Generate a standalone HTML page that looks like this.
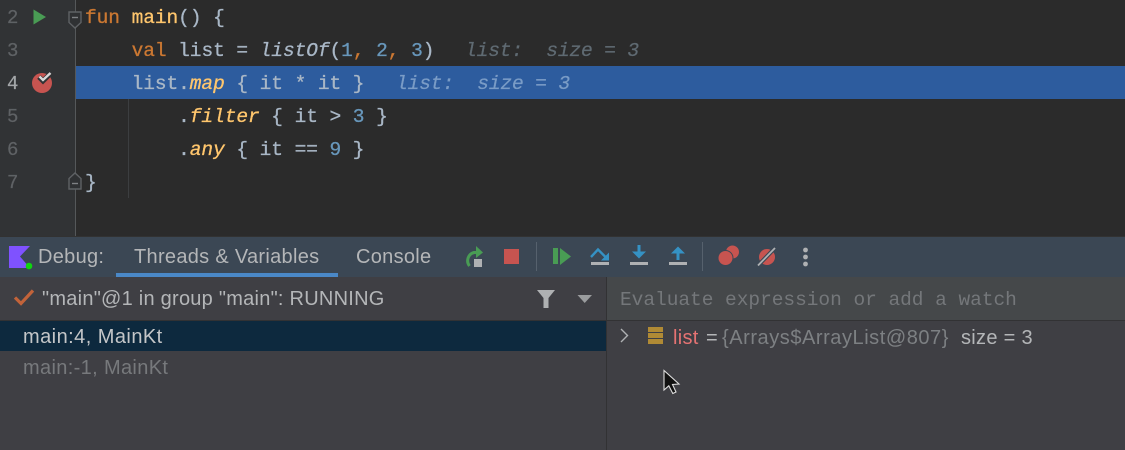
<!DOCTYPE html>
<html><head><meta charset="utf-8">
<style>
html,body{margin:0;padding:0;background:#2b2b2b}
#r{position:relative;width:1125px;height:450px;overflow:hidden;background:#2b2b2b}
.a{position:absolute}
.c,.n,.s,.t{position:absolute;white-space:pre}
.c{font:19.5px/33px "Liberation Mono",monospace;color:#a9b7c6;left:85px;height:33px;letter-spacing:-.06px;-webkit-text-stroke:.3px currentColor}
.t{font:italic 19.5px/33px "Liberation Mono",monospace;-webkit-text-stroke:.25px currentColor}
.n{font:19px/33px "Liberation Mono",monospace;color:#5f6265;left:7px;-webkit-text-stroke:.2px currentColor}
.s{font:20px/24px "Liberation Sans",sans-serif;color:#b4b6b8;letter-spacing:.3px}
.k{color:#cc7832}.f{color:#ffc66d}.i{font-style:italic}.d{color:#6897bb}
</style></head><body><div id="r">
<div class="a" style="left:0;top:0;width:75px;height:237px;background:#313335"></div>
<div class="a" style="left:74.500px;top:0;width:1.500px;height:237px;background:#55585a"></div>
<div class="a" style="left:76px;top:66px;width:1049px;height:33px;background:#2d5c9e"></div>
<div class="a" style="left:128px;top:99px;width:1px;height:99px;background:#3c3e40"></div>

<div class="n" style="top:2px">2</div><div class="n" style="top:35px">3</div><div class="n" style="top:68px;color:#a4a7a9">4</div><div class="n" style="top:101px">5</div><div class="n" style="top:134px">6</div><div class="n" style="top:167px">7</div>

<svg class="a" style="left:0;top:0" width="85" height="200">
<path d="M33.500 9.500L46 17L33.500 24.500Z" fill="#499c54"/>
<path d="M69 12H81V22.500L75 28L69 22.500Z" fill="#2f3133" stroke="#5f6265" stroke-width="1.400"/><path d="M72 17.500H78" stroke="#7f8285" stroke-width="1.400"/>
<path d="M69 183V178.500L75 173L81 178.500V189H69Z" fill="#2f3133" stroke="#5f6265" stroke-width="1.400"/><path d="M72 183.500H78" stroke="#7f8285" stroke-width="1.400"/>
<circle cx="42" cy="83" r="10" fill="#c75450"/>
<path d="M39 77L43 81L51 73" fill="none" stroke="#313335" stroke-width="5"/>
<path d="M39.500 76.500L43 80L50.500 73" fill="none" stroke="#d9d9d9" stroke-width="2.400"/>
</svg>

<div class="c" style="top:2px"><span class="k">fun</span> <span class="f">main</span>() {</div>
<div class="c" style="top:35px">    <span class="k">val</span> list = <span class="i">listOf</span>(<span class="d">1</span><span class="k">,</span> <span class="d">2</span><span class="k">,</span> <span class="d">3</span>)</div>
<div class="t" style="left:465px;top:35px;color:#5f6a72;letter-spacing:-.1px">list:  size = 3</div>
<div class="c" style="top:68px">    list.<span class="i f">map</span> { it * it }</div>
<div class="t" style="left:396px;top:68px;color:#7a9cc6;letter-spacing:-.1px">list:  size = 3</div>
<div class="c" style="top:101px">        .<span class="i f">filter</span> { it &gt; <span class="d">3</span> }</div>
<div class="c" style="top:134px">        .<span class="i f">any</span> { it == <span class="d">9</span> }</div>
<div class="c" style="top:167px">}</div>

<div class="a" style="left:0;top:237px;width:1125px;height:40px;background:#3b4754"></div>
<div class="a" style="left:0;top:236px;width:1125px;height:1px;background:#323232"></div>
<div class="a" style="left:116px;top:273px;width:222px;height:4px;background:#4a88c7"></div>
<div class="a" style="left:0;top:277px;width:1125px;height:173px;background:#3f3f44"></div>
<div class="a" style="left:607px;top:277px;width:518px;height:43px;background:#45484a"></div>
<div class="a" style="left:606px;top:277px;width:1px;height:173px;background:#323234"></div>
<div class="a" style="left:0;top:320px;width:1125px;height:1px;background:#323234"></div>
<div class="a" style="left:0;top:321px;width:606px;height:30px;background:#0d293e"></div>

<svg class="a" style="left:0;top:237px" width="1125" height="40">
<path d="M9 9H30L20 19.500L30 31H9Z" fill="#7f52ff"/>
<circle cx="29" cy="29" r="3.300" fill="#0fd60f"/>
<path d="M481 15.500H474A8.500 8.500 0 0 0 469.500 29" fill="none" stroke="#499c54" stroke-width="3"/>
<path d="M476 9L483 15.500L476 21Z" fill="#499c54"/>
<rect x="474" y="22" width="8" height="8" fill="#afb1b3"/>
<rect x="504" y="12" width="15" height="15" fill="#c75450"/>
<path d="M553 11h5v16h-5z" fill="#499c54"/><path d="M560 11L571 19.500L560 28Z" fill="#499c54"/>
<path d="M591 20L598 12.500L606 20.500" fill="none" stroke="#3592c4" stroke-width="2.400"/>
<path d="M609 15.500V23.500H601Z" fill="#3592c4"/>
<rect x="591" y="25" width="18" height="3" fill="#afb1b3"/>
<path d="M639 8V17" stroke="#3592c4" stroke-width="3"/><path d="M632 14.500H646L639 21.500Z" fill="#3592c4"/>
<rect x="630" y="25" width="18" height="3" fill="#afb1b3"/>
<path d="M678 14V23" stroke="#3592c4" stroke-width="3"/><path d="M671 16.500L678 9.500L685 16.500Z" fill="#3592c4"/>
<rect x="669" y="25" width="18" height="3" fill="#afb1b3"/>
<path d="M536.500 5V34M702.500 5V34" stroke="#56616d" stroke-width="1"/>
<circle cx="732.500" cy="15" r="6.500" fill="#c75450"/><circle cx="725.500" cy="21" r="7.500" fill="#c75450" stroke="#3b4754" stroke-width="1"/>
<circle cx="767" cy="20" r="8" fill="#c75450"/><path d="M758 28.500L775 11" stroke="#3b4754" stroke-width="4"/><path d="M758 28.500L775 11" stroke="#afb1b3" stroke-width="1.800"/>
<circle cx="805.500" cy="13" r="2.400" fill="#afb1b3"/><circle cx="805.500" cy="20" r="2.400" fill="#afb1b3"/><circle cx="805.500" cy="27" r="2.400" fill="#afb1b3"/>
</svg>

<div class="s" style="left:38px;top:245px">Debug:</div>
<div class="s" style="left:134px;top:245px;letter-spacing:.3px">Threads &amp; Variables</div>
<div class="s" style="left:356px;top:245px">Console</div>

<svg class="a" style="left:0;top:277px" width="1125" height="173">
<path d="M15 20.500L21 26.500L33 13.500" fill="none" stroke="#c2633a" stroke-width="3.200"/>
<path d="M537 13H555L548.500 21V31H543.500V21Z" fill="#afb1b3"/>
<path d="M577.500 18H592L584.700 26Z" fill="#9a9c9e"/>
<path d="M621 52L627.500 58.500L621 65" fill="none" stroke="#afb1b3" stroke-width="1.400"/>
<path d="M648 50h15v5h-15zM648 56h15v5h-15zM648 62h15v5h-15z" fill="#b08a35"/>
<path d="M664 93.500V113L668.800 108.800L672.800 116.500L676 115L672.500 107.500L679 107Z" fill="#111" stroke="#ddd" stroke-width="1.100"/>
</svg>

<div class="s" style="left:42px;top:287px;letter-spacing:.25px">"main"@1 in group "main": RUNNING</div>
<div class="a" style="left:620px;top:288px;font:19.500px/24px 'Liberation Mono',monospace;letter-spacing:-.03px;color:#74777a;white-space:pre">Evaluate expression or add a watch</div>
<div class="s" style="left:23px;top:325px;color:#c4c6c8;letter-spacing:.45px">main:4, MainKt</div>
<div class="s" style="left:23px;top:356px;color:#77797c;letter-spacing:.35px">main:-1, MainKt</div>
<div class="s" style="left:673px;top:326px;color:#e57373">list</div>
<div class="s" style="left:706px;top:326px">=</div>
<div class="s" style="left:722px;top:326px;color:#7d8083;letter-spacing:.55px">{Arrays$ArrayList@807}</div>
<div class="s" style="left:961px;top:326px">size = 3</div>
</div></body></html>
